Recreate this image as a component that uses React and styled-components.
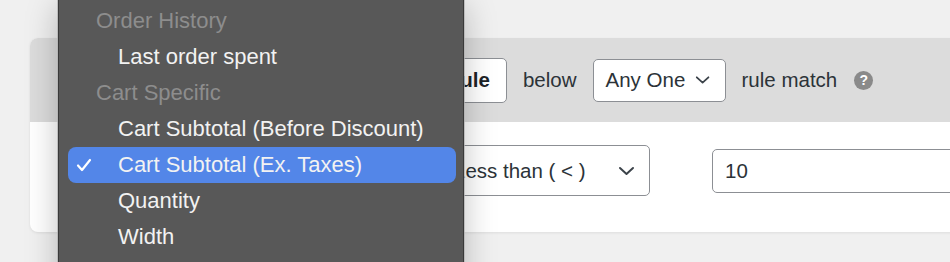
import styled, { createGlobalStyle } from 'styled-components';

const GlobalStyle = createGlobalStyle`
  html, body {
    margin: 0;
    padding: 0;
    background: #f0f0f0;
    overflow: hidden;
  }
  body {
    font-family: 'Liberation Sans', Arial, sans-serif;
    color: #1d2327;
  }
`;

const Page = styled.div`
  position: relative;
  width: 950px;
  height: 262px;
  padding: 38px 0 0 30px;
  box-sizing: border-box;
  overflow: hidden;
`;

const Card = styled.div`
  width: 1100px;
  border-radius: 8px;
  background: #ffffff;
  box-shadow: 0 1px 3px rgba(0, 0, 0, 0.08);
  overflow: hidden;
`;

// the left part of both rows sits under the open menu
const Header = styled.div`
  height: 84px;
  background: #dcdcdc;
  display: flex;
  align-items: center;
  gap: 16px;
  padding-left: 353px;
  font-size: 20.5px;
`;

const Button = styled.button`
  height: 45px;
  padding: 0 16px;
  border: 1px solid #8c8f94;
  border-radius: 5px;
  background: #ffffff;
  font: 600 20.5px 'Liberation Sans', Arial, sans-serif;
  color: #1d2327;
`;

const Label = styled.span`
  color: #2c3338;
`;

const Select = styled.div`
  box-sizing: border-box;
  height: ${(p) => p.$height}px;
  width: ${(p) => p.$width}px;
  padding: 0 14px 0 12px;
  border: 1px solid #8c8f94;
  border-radius: 5px;
  background: #ffffff;
  display: flex;
  align-items: center;
  justify-content: space-between;
  gap: 10px;
  font-size: 20.5px;
  color: #2c3338;
  white-space: nowrap;
`;

const Chevron = () => (
  <svg width="17" height="10" viewBox="0 0 17 10">
    <polyline
      points="2,2 8.5,8 15,2"
      fill="none"
      stroke="#3c434a"
      strokeWidth="2"
      strokeLinecap="round"
      strokeLinejoin="round"
    />
  </svg>
);

const Help = styled.span`
  width: 19px;
  height: 19px;
  margin-left: 1px;
  border-radius: 50%;
  background: #8a8a8a;
  color: #ffffff;
  font-size: 14px;
  font-weight: 700;
  display: flex;
  align-items: center;
  justify-content: center;
`;

const Body = styled.div`
  display: flex;
  align-items: center;
  gap: 62px;
  padding: 23px 0 36px 411px;
`;

const Input = styled.div`
  box-sizing: border-box;
  width: 400px;
  height: 44px;
  padding: 0 12px;
  border: 1px solid #8c8f94;
  border-radius: 5px;
  display: flex;
  align-items: center;
  font-size: 20.5px;
  color: #2c3338;
`;

const Menu = styled.div`
  position: absolute;
  top: -6px;
  left: 58px;
  width: 406px;
  height: 300px;
  box-sizing: border-box;
  padding-top: 8px;
  background: #585858;
  border: 1px solid #3a3a3a;
  box-shadow: 0 0 0 1px rgba(175, 175, 175, 0.7), 0 12px 30px rgba(0, 0, 0, 0.25);
  font-size: 22px;
`;

const GroupLabel = styled.div`
  height: 36px;
  line-height: 36px;
  padding-left: 37px;
  color: #8d8d8d;
`;

const Item = styled.div`
  position: relative;
  height: 36px;
  line-height: 36px;
  margin: 0 7px 0 9px;
  padding-left: 50px;
  border-radius: 8px;
  color: #f2f2f2;
  background: ${(p) => (p.$selected ? '#5386e8' : 'transparent')};

  svg {
    position: absolute;
    left: 8px;
    top: 11px;
  }
`;

const Check = () => (
  <svg width="16" height="14" viewBox="0 0 16 14">
    <polyline
      points="2,7.5 6,12 14,2"
      fill="none"
      stroke="#ffffff"
      strokeWidth="2.2"
      strokeLinecap="round"
      strokeLinejoin="round"
    />
  </svg>
);

const menu = [
  { group: 'Order History' },
  { label: 'Last order spent' },
  { group: 'Cart Specific' },
  { label: 'Cart Subtotal (Before Discount)' },
  { label: 'Cart Subtotal (Ex. Taxes)', selected: true },
  { label: 'Quantity' },
  { label: 'Width' },
];

export default function App() {
  return (
    <>
      <GlobalStyle />
      <Page>
        <Card>
          <Header>
            <Button>Add Rule</Button>
            <Label>below</Label>
            <Select $height={43} $width={133}>
              Any One <Chevron />
            </Select>
            <Label>rule match</Label>
            <Help>?</Help>
          </Header>
          <Body>
            <Select $height={51} $width={209}>
              Less than ( &lt; ) <Chevron />
            </Select>
            <Input>10</Input>
          </Body>
        </Card>
        <Menu>
          {menu.map((m) =>
            m.group ? (
              <GroupLabel key={m.group}>{m.group}</GroupLabel>
            ) : (
              <Item key={m.label} $selected={m.selected}>
                {m.selected && <Check />}
                {m.label}
              </Item>
            )
          )}
        </Menu>
      </Page>
    </>
  );
}
